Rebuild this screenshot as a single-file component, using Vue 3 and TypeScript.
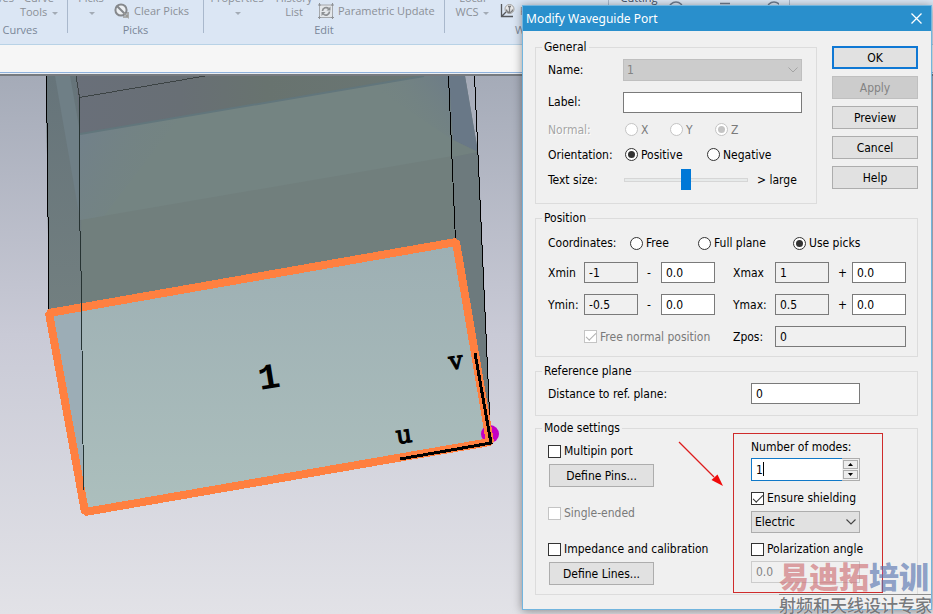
<script setup lang="ts">
import { reactive } from 'vue'

const form = reactive({
  name: '1',
  label: '',
  normal: 'Z',
  orientation: 'Positive',
  textSize: 50,
  coordinates: 'Use picks',
  xmin: '-1',
  xminOffset: '0.0',
  xmax: '1',
  xmaxOffset: '0.0',
  ymin: '-0.5',
  yminOffset: '0.0',
  ymax: '0.5',
  ymaxOffset: '0.0',
  freeNormal: true,
  zpos: '0',
  distance: '0',
  multipin: false,
  singleEnded: false,
  impedance: false,
  modes: '1',
  shielding: true,
  shieldingType: 'Electric',
  polarization: false,
  angle: '0.0'
})

function stepModes(delta: number) {
  form.modes = String(Math.max(1, Number(form.modes) + delta))
}
</script>

<template>
  <div class="app">
    <header class="ribbon">
      <section class="group curves">
        <div class="tools">
          <button class="tall clipped"><span>Curves</span><span>&nbsp;</span></button>
          <button class="tall curve"><span>Curve</span><span>Tools <i class="drop"></i></span></button>
        </div>
        <h2>Curves</h2>
      </section>
      <section class="group picks">
        <div class="tools">
          <button class="tall pick"><span>Picks</span><span><i class="drop"></i></span></button>
          <button class="flat">
            <svg width="16" height="16" viewBox="0 0 16 16">
              <circle cx="7" cy="7" r="5.6" fill="#eceff2" stroke="#85888c" stroke-width="2" />
              <path d="M3.2 3.2 11 11" stroke="#85888c" stroke-width="2" />
              <path d="M10 10l4 4v-5M9 14h5" fill="none" stroke="#9b9b98" stroke-width="1.6" />
            </svg>
            Clear Picks
          </button>
        </div>
        <h2>Picks</h2>
      </section>
      <section class="group edit">
        <div class="tools">
          <button class="tall props"><span>Properties</span><span><i class="drop"></i></span></button>
          <button class="tall history"><span>History</span><span>List</span></button>
          <button class="flat">
            <svg width="16" height="16" viewBox="0 0 16 16">
              <rect x="1.5" y="2" width="13" height="12.5" fill="#e4e7ea" stroke="#a5a8ac" />
              <path d="M0 2h3M13 2h3M0 14.500h3M13 14.500h3M1.500 0v3M14.500 0v3M1.500 13v3M14.500 13v3" stroke="#8f9296" />
              <path d="M4.500 8a3.600 3.600 0 0 1 6.200-2.300M11.500 8.600a3.600 3.600 0 0 1-6.200 2.400" fill="none" stroke="#8c8f92" stroke-width="1.700" />
              <path d="M12.500 3.500v4h-4zM3.500 13V9h4z" fill="#8c8f92" />
            </svg>
            Parametric Update
          </button>
        </div>
        <h2>Edit</h2>
      </section>
      <section class="group wcs">
        <div class="tools">
          <button class="tall local"><span>Local</span><span>WCS <i class="drop"></i></span></button>
          <button class="flat">
            <svg width="16" height="16" viewBox="0 0 16 16">
              <path d="M1.500 1v12.500H13M1.500 13.500 6 9" fill="none" stroke="#55585c" stroke-width="1.300" />
              <circle cx="9.500" cy="6" r="4.500" fill="#e8e8e8" stroke="#a2a2a0" />
              <path d="M9.500 3v6M6.500 6.500a3 3 0 0 0 6 0M8 3.500h3" fill="none" stroke="#77797c" stroke-width="1.300" />
            </svg>
            Fix WCS
          </button>
        </div>
        <h2>WCS</h2>
      </section>
      <section class="group cutting">
        <div class="tools">
          <button class="tall plane"><span>Cutting</span><span>Plane</span></button>
          <svg class="arcs" width="110" height="22" viewBox="0 0 110 22">
            <g fill="none" stroke="#6f7c8e" stroke-width="1.500">
              <circle cx="7" cy="12" r="7" />
              <path d="M51 6.500h10" />
              <circle cx="105" cy="12" r="7" />
            </g>
          </svg>
        </div>
      </section>
    </header>
    <div class="strip"></div>

    <main class="viewport">
      <svg class="scene" viewBox="0 76 933 538" preserveAspectRatio="xMinYMin slice" role="img" aria-label="Waveguide port 1">
        <defs>
          <linearGradient id="face" x1="0" y1="0" x2="0" y2="1">
            <stop offset="0" stop-color="#9dafb3" />
            <stop offset="1" stop-color="#acbfbd" />
          </linearGradient>
          <linearGradient id="roof" x1="0" y1="0" x2="1" y2="0">
            <stop offset="0" stop-color="#696f79" />
            <stop offset="0.300" stop-color="#686f75" />
            <stop offset="0.550" stop-color="#68736f" />
            <stop offset="1" stop-color="#6a7674" />
          </linearGradient>
          <linearGradient id="side" x1="0" y1="0" x2="0" y2="1">
            <stop offset="0" stop-color="#66747a" />
            <stop offset="1" stop-color="#727f80" />
          </linearGradient>
          <linearGradient id="tintLeft" x1="0" y1="0" x2="1" y2="0.500">
            <stop offset="0" stop-color="#71808b" />
            <stop offset="1" stop-color="#748482" stop-opacity="0" />
          </linearGradient>
          <linearGradient id="tintRight" x1="1" y1="0" x2="0.200" y2="0.500">
            <stop offset="0" stop-color="#6c7b88" />
            <stop offset="1" stop-color="#748482" stop-opacity="0" />
          </linearGradient>
        </defs>

        <path d="M46 76H465L478 152 491 443 49 315z" fill="#717f7d" />
        <path d="M46 76H80L82 304 49 310z" fill="url(#side)" />
        <path d="M55 76H70L80 132V220z" fill="#6f7f86" />
        <path d="M80 134 424 76H449L453 156 80 220z" fill="#748482" />
        <path d="M80 134 180 117 104 216 80 220z" fill="url(#tintLeft)" />
        <path d="M370 85 424 76H449L453 140z" fill="url(#tintRight)" />
        <path d="M449 76H465L478 152 453 140z" fill="#697887" />
        <path d="M453 140 478 152 453 157z" fill="#72817f" />
        <path d="M453 157 478 152 491 443 455 241z" fill="#6d7a7d" />
        <path d="M76 76H424L80 134z" fill="url(#roof)" />
        <path d="M80 134 424 76" stroke="#62767c" stroke-width="2" />

        <g fill="none" stroke="#3c4344" shape-rendering="crispEdges">
          <path d="M76 76 79.500 97.500 205 76" />
          <path d="M79.500 97V210L82 310" stroke="#273332" />
        </g>
        <g fill="none" stroke="#000" shape-rendering="crispEdges">
          <path d="M46.500 76 49 310" />
          <path d="M448.500 76 455.500 241" />
          <path d="M474.500 76 490.500 435" />
        </g>

        <path d="M49 313 456 241 491 443 85 512z" fill="url(#face)" />
        <path d="M49 313 82 307 83 500z" fill="#9cadb6" />
        <circle cx="490" cy="434" r="9" fill="#c400c4" />
        <g shape-rendering="crispEdges" fill="none">
          <path d="M49 313 456 242 490 442 85 512z" stroke="#ff8040" stroke-width="8" stroke-linejoin="bevel" />
          <path d="M81.500 302 83.500 490" stroke="#263434" />
          <path d="M475 353 491 443 400 459" stroke="#000" stroke-width="3" />
        </g>
        <text class="port" transform="translate(260 390) rotate(-9)">1</text>
        <text class="axis" transform="translate(397 444) rotate(-8)">u</text>
        <text class="axis" transform="translate(450 370) rotate(-8)">v</text>
      </svg>
    </main>

    <section class="dialog" role="dialog" aria-labelledby="dialog-title">
      <div class="titlebar">
        <h1 id="dialog-title">Modify Waveguide Port</h1>
        <button class="close" aria-label="Close">
          <svg width="11" height="11" viewBox="0 0 11 11"><path d="M.500.500l10 10M10.500.500l-10 10" stroke="#fff" stroke-width="1.300" /></svg>
        </button>
      </div>

      <form class="body" @submit.prevent>
        <div class="top">
          <fieldset>
            <legend>General</legend>
            <div class="general">
              <div class="row field">
                <label for="name">Name:</label>
                <span class="select">
                  <select id="name" v-model="form.name" disabled><option>1</option></select>
                  <svg width="10" height="6" viewBox="0 0 10 6"><path d="M.500.500 5 5 9.500.500" fill="none" stroke="#a4a4a4" /></svg>
                </span>
              </div>
              <div class="row field second">
                <label for="label">Label:</label>
                <input id="label" v-model="form.label" type="text" />
              </div>
              <div class="row line" role="radiogroup" aria-label="Normal">
                <span class="caption engraved">Normal:</span>
                <label v-for="axis in ['X', 'Y', 'Z']" :key="axis" class="option axis-option off">
                  <input v-model="form.normal" type="radio" name="normal" :value="axis" disabled />{{ axis }}
                </label>
              </div>
              <div class="row line" role="radiogroup" aria-label="Orientation">
                <span class="caption">Orientation:</span>
                <label v-for="side in ['Positive', 'Negative']" :key="side" class="option side-option">
                  <input v-model="form.orientation" type="radio" name="orientation" :value="side" />{{ side }}
                </label>
              </div>
              <div class="row line">
                <label class="caption" for="size">Text size:</label>
                <input id="size" v-model="form.textSize" type="range" min="0" max="100" />
                <span class="large">&gt; large</span>
              </div>
            </div>
          </fieldset>
          <div class="actions">
            <button class="btn primary" type="submit">OK</button>
            <button class="btn" type="button" disabled>Apply</button>
            <button class="btn" type="button">Preview</button>
            <button class="btn" type="button">Cancel</button>
            <button class="btn" type="button">Help</button>
          </div>
        </div>

        <fieldset>
          <legend>Position</legend>
          <div class="position">
            <div class="row coords" role="radiogroup" aria-label="Coordinates">
              <span class="caption">Coordinates:</span>
              <label class="option free"><input v-model="form.coordinates" type="radio" name="coords" value="Free" />Free</label>
              <label class="option full"><input v-model="form.coordinates" type="radio" name="coords" value="Full plane" />Full plane</label>
              <label class="option"><input v-model="form.coordinates" type="radio" name="coords" value="Use picks" />Use picks</label>
            </div>
            <div class="bounds">
              <label for="xmin">Xmin</label>
              <input id="xmin" v-model="form.xmin" type="text" readonly />
              <span class="sign">-</span>
              <input v-model="form.xminOffset" type="text" aria-label="Xmin offset" />
              <label class="right" for="xmax">Xmax</label>
              <input id="xmax" v-model="form.xmax" type="text" readonly />
              <span class="sign plus">+</span>
              <input v-model="form.xmaxOffset" type="text" aria-label="Xmax offset" />

              <label for="ymin">Ymin:</label>
              <input id="ymin" v-model="form.ymin" type="text" readonly />
              <span class="sign">-</span>
              <input v-model="form.yminOffset" type="text" aria-label="Ymin offset" />
              <label class="right" for="ymax">Ymax:</label>
              <input id="ymax" v-model="form.ymax" type="text" readonly />
              <span class="sign plus">+</span>
              <input v-model="form.ymaxOffset" type="text" aria-label="Ymax offset" />

              <label class="option off normal-free"><input v-model="form.freeNormal" type="checkbox" disabled />Free normal position</label>
              <label class="right" for="zpos">Zpos:</label>
              <input id="zpos" v-model="form.zpos" class="wide" type="text" readonly />
            </div>
          </div>
        </fieldset>

        <fieldset>
          <legend>Reference plane</legend>
          <div class="reference">
            <label for="distance">Distance to ref. plane:</label>
            <input id="distance" v-model="form.distance" type="text" />
          </div>
        </fieldset>

        <fieldset class="mode">
          <legend>Mode settings</legend>
          <div class="modes">
            <div class="col">
              <label class="option"><input v-model="form.multipin" type="checkbox" />Multipin port</label>
              <button class="btn define" type="button">Define Pins...</button>
              <label class="option off single"><input v-model="form.singleEnded" type="checkbox" disabled />Single-ended</label>
              <label class="option impedance"><input v-model="form.impedance" type="checkbox" />Impedance and calibration</label>
              <button class="btn define" type="button">Define Lines...</button>
            </div>
            <div class="col side">
              <label for="modes">Number of modes:</label>
              <div class="spinner">
                <input id="modes" v-model="form.modes" type="text" />
                <i class="caret"></i>
                <span class="steps">
                  <button type="button" aria-label="Increase" @click="stepModes(1)"><svg width="5" height="3" viewBox="0 0 5 3"><path d="M0 3 2.500 0 5 3z" /></svg></button>
                  <button type="button" aria-label="Decrease" @click="stepModes(-1)"><svg width="5" height="3" viewBox="0 0 5 3"><path d="M0 0 2.500 3 5 0z" /></svg></button>
                </span>
              </div>
              <label class="option shield"><input v-model="form.shielding" type="checkbox" />Ensure shielding</label>
              <span class="select">
                <select v-model="form.shieldingType" aria-label="Shielding type"><option>Electric</option></select>
                <svg width="10" height="6" viewBox="0 0 10 6"><path d="M.500.500 5 5 9.500.500" fill="none" stroke="#444" stroke-width="1.100" /></svg>
              </span>
              <label class="option polar"><input v-model="form.polarization" type="checkbox" />Polarization angle</label>
              <input v-model="form.angle" class="angle" type="text" aria-label="Polarization angle value" disabled />
            </div>
          </div>
          <div class="highlight"></div>
          <svg class="arrow" width="46" height="46" viewBox="0 0 46 46">
            <path d="M1 1 L36 36" fill="none" stroke="#dc1c1c" stroke-width="1.200" />
            <path d="M45 45 33.500 39 39.500 33.500z" fill="#f00a0a" />
          </svg>
        </fieldset>
      </form>
    </section>

    <div class="watermark">
      <p class="brand"><span>易迪拓</span><span class="blue">培训</span></p>
      <p class="tag">射频和天线设计专家</p>
    </div>
  </div>
</template>

<style>
body {
  margin: 0;
}
</style>

<style scoped>
.app {
  position: relative;
  display: flex;
  flex-direction: column;
  height: 100vh;
  min-height: 614px;
  overflow: hidden;
  font-family: 'Noto Sans', 'Open Sans', sans-serif;
  font-size: 12px;
  line-height: 16px;
  color: #000;
}
* {
  box-sizing: border-box;
}
button,
input,
select {
  margin: 0;
  font: inherit;
  color: inherit;
}
h1,
h2,
p {
  margin: 0;
  font-weight: 400;
}

/* Ribbon */
.ribbon {
  display: flex;
  flex: none;
  height: 45px;
  overflow: hidden;
  background: #dbe6f4;
  border-bottom: 1px solid #b8d2e6;
  color: #8b9097;
  font-family: 'Open Sans', 'Noto Sans', sans-serif;
  font-size: 11px;
}
.group {
  position: relative;
  flex: none;
  height: 33px;
  border-right: 1px solid #a9b8cc;
}
.tools {
  display: flex;
  align-items: flex-end;
  height: 19px;
}
.ribbon button {
  flex: none;
  padding: 0;
  border: 0;
  background: none;
  white-space: nowrap;
}
.tall span {
  display: block;
  height: 14px;
  line-height: 14px;
}
.flat {
  display: flex;
  align-items: center;
  gap: 4px;
}
.ribbon h2 {
  padding-top: 3px;
  font-size: 11px;
  color: #7a8798;
  text-align: center;
}
.drop {
  display: inline-block;
  margin-left: 2px;
  border: 3px solid transparent;
  border-top-color: #a3abb5;
  border-bottom: 0;
  vertical-align: 1px;
}
.curves {
  width: 68px;
}
.curves h2 {
  padding-right: 27px;
}
.clipped {
  display: flex;
  flex-direction: column;
  align-items: flex-end;
  width: 14px;
}
.curve {
  width: 50px;
}
.picks {
  width: 136px;
}
.pick {
  width: 46px;
}
.edit {
  width: 241px;
}
.props {
  width: 66px;
}
.history {
  width: 48px;
}
.wcs {
  width: 164px;
}
.local {
  width: 55px;
}
.cutting {
  width: 181px;
  color: #3e4c61;
}
.plane {
  width: 60px;
}
.arcs {
  flex: none;
}
.strip {
  flex: none;
  height: 31px;
  background: #f6f6f6;
  border-bottom: 2px solid #777b80;
  box-shadow: inset 0 -1px #e9edf2, inset 0 -2px #8fb2dc;
}

/* 3D view */
.viewport {
  flex: 1;
  min-height: 0;
  background: linear-gradient(#a5abb8, #c9cad6 48%, #e2e2e7);
}
.scene {
  display: block;
  width: 100%;
  height: 100%;
}
.port,
.axis {
  font-family: 'Liberation Mono', monospace;
  font-size: 36px;
  font-weight: 700;
}
.axis {
  font-family: 'DejaVu Serif', serif;
  font-size: 25px;
  font-weight: 400;
  stroke: #000;
  stroke-width: 1px;
}

/* Dialog */
.dialog {
  position: absolute;
  top: 5px;
  right: 1px;
  width: 410px;
  background: #f0f0f0;
  border: 1px solid #72b5de;
  box-shadow: 0 1px 9px rgba(0, 0, 0, 0.4);
  font-family: 'DejaVu Sans Condensed', 'Noto Sans', sans-serif;
}
.titlebar {
  display: flex;
  align-items: center;
  justify-content: space-between;
  height: 25px;
  padding: 0 9px 0 3px;
  background: #298fcc;
  color: #fff;
}
.titlebar h1 {
  font-family: 'Noto Sans', 'Open Sans', sans-serif;
  font-size: 12px;
}
.close {
  display: flex;
  padding: 0;
  border: 0;
  background: none;
}
.body {
  display: flex;
  flex-direction: column;
  gap: 6px;
  padding: 8px 13px 14px 12px;
}
fieldset {
  min-width: 0;
  margin: 0;
  padding: 0;
  border: 1px solid #dcdcdc;
}
legend {
  margin-left: 6px;
  padding: 0 2px;
}
.top {
  display: flex;
  gap: 15px;
}
.top fieldset {
  flex: 1;
}
.actions {
  display: flex;
  flex-direction: column;
  gap: 7px;
  width: 86px;
  padding-top: 7px;
}
.btn {
  height: 23px;
  padding: 0;
  border: 1px solid #adadad;
  background: #e1e1e1;
}
.btn.primary {
  border: 2px solid #0f78d4;
}
.btn:disabled {
  background: #cccccc;
  border-color: #bfbfbf;
  color: #838383;
}

.row,
.option {
  display: flex;
  align-items: center;
}
.option {
  gap: 3px;
  white-space: nowrap;
}
.off {
  color: #7a7a7a;
}
input[type='text'],
select {
  width: 100%;
  min-width: 0;
  height: 21px;
  padding: 0 4px;
  border: 1px solid #7a7a7a;
  border-radius: 0;
  background: #fff;
  outline: 0;
}
input[readonly] {
  background: #f0f0f0;
}
input[type='radio'],
input[type='checkbox'] {
  appearance: none;
  flex: none;
  display: grid;
  place-items: center;
  width: 13px;
  height: 13px;
  border: 1px solid #333;
  background: #fff;
}
input[type='radio'] {
  border-radius: 50%;
}
input[type='radio']:checked::before {
  content: '';
  width: 7px;
  height: 7px;
  border-radius: 50%;
  background: #333;
}
input[type='checkbox']:checked::before {
  content: '';
  width: 9px;
  height: 4px;
  border: solid #333;
  border-width: 0 0 1px 1px;
  transform: translateY(-1px) rotate(-45deg);
}
input[type='radio']:disabled,
input[type='checkbox']:disabled {
  border-color: #c4c4c4;
}
input[type='radio']:disabled:checked::before {
  background: #c4c4c4;
}
input[type='checkbox']:disabled:checked::before {
  border-color: #b0b0b0;
}
.select {
  position: relative;
  display: block;
}
.select select {
  display: block;
  appearance: none;
  height: 22px;
  padding: 0 3px;
  border-color: #adadad;
  background: #e1e1e1;
}
.select select:disabled {
  border-color: #bfbfbf;
  background: #cccccc;
  color: #838383;
  opacity: 1;
}
.select svg {
  position: absolute;
  top: 8px;
  right: 4px;
  pointer-events: none;
}

.general {
  padding: 4px 14px 11px 12px;
}
.field {
  display: grid;
  grid-template-columns: 75px 1fr;
  height: 22px;
}
.second {
  margin: 10px 0 4px;
}
.line {
  height: 25px;
}
.caption {
  flex: none;
  width: 77px;
}
.engraved {
  color: #a6a6a6;
  text-shadow: 1px 1px #fff;
}
.axis-option {
  width: 45px;
}
.side-option {
  width: 82px;
}
input[type='range'] {
  appearance: none;
  width: 124px;
  height: 21px;
  margin-left: -1px;
  background: linear-gradient(#d6d6d6, #d6d6d6) center / 100% 4px no-repeat;
}
input[type='range']::-webkit-slider-runnable-track {
  height: 21px;
  background: linear-gradient(#e7eaea, #e7eaea) center / 122px 2px no-repeat;
}
input[type='range']::-webkit-slider-thumb {
  appearance: none;
  width: 10px;
  height: 21px;
  background: #0078d7;
}
.large {
  margin-left: 9px;
  white-space: nowrap;
}

.position {
  padding: 7px 11px 9px 12px;
}
.coords {
  height: 20px;
  margin-bottom: 9px;
}
.coords .caption {
  width: 82px;
}
.free {
  width: 68px;
}
.full {
  width: 95px;
}
.bounds {
  display: grid;
  grid-template-columns: 36px 1fr 23px 1fr 60px 1fr 23px 1fr;
  row-gap: 11px;
  align-items: center;
}
.right {
  padding-left: 18px;
}
.sign {
  padding-left: 9px;
}
.normal-free {
  grid-column: 2 / 5;
}
.wide {
  grid-column: 6 / 9;
}

.reference {
  display: grid;
  grid-template-columns: 1fr 109px;
  align-items: center;
  padding: 4px 57px 11px 12px;
}

.mode {
  position: relative;
  margin-top: -2px;
}
.modes {
  display: grid;
  grid-template-columns: 1fr 109px;
  padding: 3px 57px 9px 12px;
}
.col {
  display: flex;
  flex-direction: column;
  align-items: flex-start;
  padding-top: 4px;
}
.col.side {
  align-items: stretch;
  padding-top: 0;
}
.define {
  width: 105px;
  margin: 5px 0 0 1px;
}
.single {
  margin-top: 18px;
}
.impedance {
  margin-top: 20px;
}
.spinner {
  position: relative;
  display: flex;
  height: 23px;
  margin-top: 3px;
  border: 1px solid #adadad;
  border-left: 0;
}
.spinner input[type='text'] {
  flex: 1;
  height: 23px;
  margin: -1px 0;
  border: 1px solid #0f78c8;
  border-right: 0;
}
.caret {
  position: absolute;
  top: 3px;
  left: 12px;
  width: 1px;
  height: 14px;
  background: #000;
}
.steps {
  display: flex;
  flex: none;
  flex-direction: column;
  gap: 1px;
  width: 17px;
  padding: 1px;
}
.steps button {
  display: flex;
  flex: 1;
  align-items: center;
  justify-content: center;
  padding: 0;
  border: 1px solid #adadad;
  background: #ececec;
}
.shield {
  margin: 9px 0 5px;
}
.polar {
  margin: 8px 0 4px;
}
.side .angle {
  height: 22px;
  border-color: #cccccc;
  background: #f0f0f0;
  color: #838383;
}
.highlight {
  position: absolute;
  top: -3px;
  right: 34px;
  bottom: 1px;
  width: 150px;
  border: 1px solid #cf2b2b;
  pointer-events: none;
}
.arrow {
  position: absolute;
  top: 5px;
  left: 142px;
  pointer-events: none;
}

/* Watermark */
.watermark {
  position: absolute;
  right: 2px;
  bottom: 0;
  width: 152px;
  font-family: 'Noto Sans CJK SC', sans-serif;
  white-space: nowrap;
  pointer-events: none;
}
.brand {
  height: 36px;
  border-bottom: 1px solid #8d8d8d;
  font-size: 30px;
  font-weight: 900;
  line-height: 32px;
  color: rgba(205, 110, 115, 0.65);
}
.blue {
  color: rgba(85, 115, 175, 0.65);
}
.tag {
  font-size: 17px;
  font-weight: 500;
  line-height: 19px;
  color: #77797c;
  text-shadow: 0 0 1px #fff;
}
</style>
